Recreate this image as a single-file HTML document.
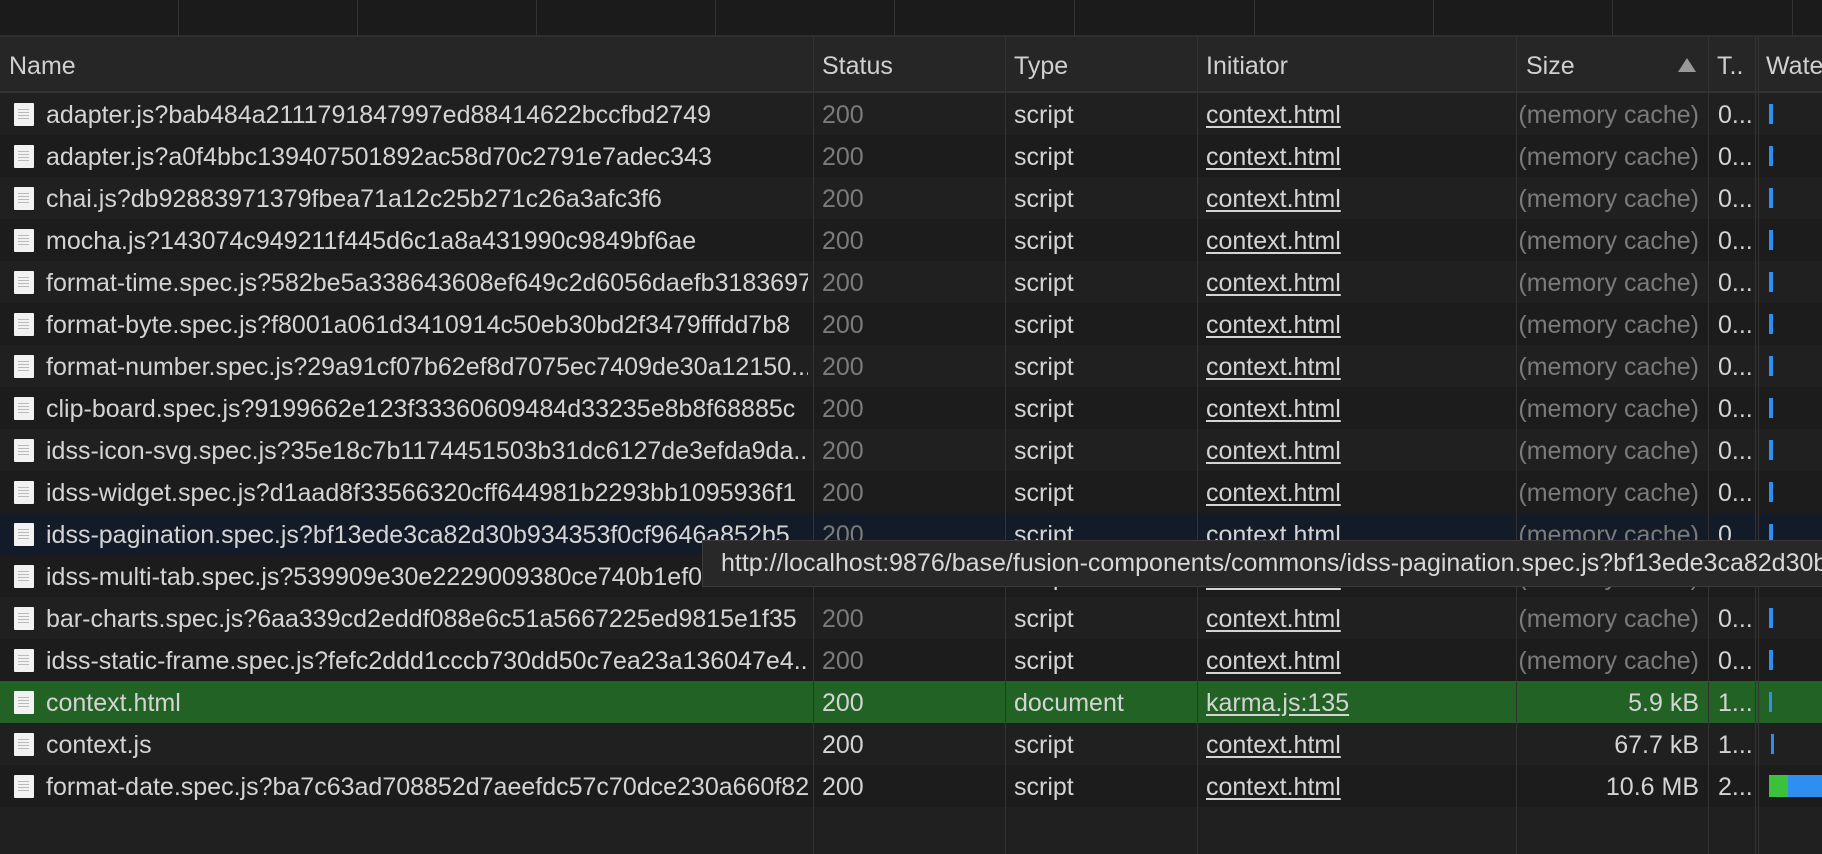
<!DOCTYPE html>
<html><head><meta charset="utf-8"><style>
*{margin:0;padding:0;box-sizing:border-box}
body{width:1822px;height:854px;overflow:hidden;background:#202020;font-family:"Liberation Sans",Arial,sans-serif;font-size:25px;color:#d4d4d4;position:relative}
.top{position:absolute;left:0;top:0;width:1822px;height:37px;background:#1b1b1b;border-bottom:2px solid #2e2e2e}
.top i{position:absolute;top:0;width:1px;height:37px;background:#333}
.hdr{position:absolute;left:0;top:37px;width:1822px;height:56px;background:#262626;border-bottom:2px solid #333}
.hdr span{position:absolute;top:15px;color:#d0d0d0}
.row{position:absolute;left:0;width:1822px;height:42px}
.row span{position:absolute;top:8px;white-space:nowrap}
.row span.n{max-width:762px;overflow:hidden}
.row .ic{position:absolute;left:14px;top:10px;width:20px;height:23px;background:#f2f2f2;border-radius:1px}
.row .ic:before{content:"";position:absolute;left:4px;top:4px;width:11px;height:14px;background:repeating-linear-gradient(#f2f2f2 0 2px,#bbb 2px 3px)}
.u{text-decoration:underline;text-underline-offset:3px}
.g{color:#7b7b7b}
.vl{position:absolute;top:37px;width:1px;height:817px;background:#333}
.bar{position:absolute;top:11px;left:1769px;width:4px;height:20px;background:#2e8ff0}
</style></head><body>
<div class="top">
<i style="left:178px"></i><i style="left:357px"></i><i style="left:536px"></i><i style="left:715px"></i><i style="left:894px"></i><i style="left:1074px"></i><i style="left:1254px"></i><i style="left:1433px"></i><i style="left:1612px"></i><i style="left:1792px"></i>
</div>
<div class="hdr">
<span style="left:9px">Name</span><span style="left:822px">Status</span><span style="left:1014px">Type</span><span style="left:1206px">Initiator</span><span style="left:1526px">Size</span>
<span style="left:1678px;top:21px;width:0;height:0;border-left:9px solid transparent;border-right:9px solid transparent;border-bottom:14px solid #999"></span>
<span style="left:1717px">T..</span><span style="left:1766px">Wate</span>
</div>
<div class="row" style="top:93px;background:#202020"><div class="ic"></div><span class="n" style="left:46px">adapter.js?bab484a2111791847997ed88414622bccfbd2749</span><span class="g" style="left:822px">200</span><span style="left:1014px">script</span><span class="u" style="left:1206px">context.html</span><span class="g" style="right:123px">(memory cache)</span><span style="left:1718px">0...</span><div class="bar"></div></div>
<div class="row" style="top:135px;background:#1c1c1c"><div class="ic"></div><span class="n" style="left:46px">adapter.js?a0f4bbc139407501892ac58d70c2791e7adec343</span><span class="g" style="left:822px">200</span><span style="left:1014px">script</span><span class="u" style="left:1206px">context.html</span><span class="g" style="right:123px">(memory cache)</span><span style="left:1718px">0...</span><div class="bar"></div></div>
<div class="row" style="top:177px;background:#202020"><div class="ic"></div><span class="n" style="left:46px">chai.js?db92883971379fbea71a12c25b271c26a3afc3f6</span><span class="g" style="left:822px">200</span><span style="left:1014px">script</span><span class="u" style="left:1206px">context.html</span><span class="g" style="right:123px">(memory cache)</span><span style="left:1718px">0...</span><div class="bar"></div></div>
<div class="row" style="top:219px;background:#1c1c1c"><div class="ic"></div><span class="n" style="left:46px">mocha.js?143074c949211f445d6c1a8a431990c9849bf6ae</span><span class="g" style="left:822px">200</span><span style="left:1014px">script</span><span class="u" style="left:1206px">context.html</span><span class="g" style="right:123px">(memory cache)</span><span style="left:1718px">0...</span><div class="bar"></div></div>
<div class="row" style="top:261px;background:#202020"><div class="ic"></div><span class="n" style="left:46px">format-time.spec.js?582be5a338643608ef649c2d6056daefb3183697</span><span class="g" style="left:822px">200</span><span style="left:1014px">script</span><span class="u" style="left:1206px">context.html</span><span class="g" style="right:123px">(memory cache)</span><span style="left:1718px">0...</span><div class="bar"></div></div>
<div class="row" style="top:303px;background:#1c1c1c"><div class="ic"></div><span class="n" style="left:46px">format-byte.spec.js?f8001a061d3410914c50eb30bd2f3479fffdd7b8</span><span class="g" style="left:822px">200</span><span style="left:1014px">script</span><span class="u" style="left:1206px">context.html</span><span class="g" style="right:123px">(memory cache)</span><span style="left:1718px">0...</span><div class="bar"></div></div>
<div class="row" style="top:345px;background:#202020"><div class="ic"></div><span class="n" style="left:46px">format-number.spec.js?29a91cf07b62ef8d7075ec7409de30a12150...</span><span class="g" style="left:822px">200</span><span style="left:1014px">script</span><span class="u" style="left:1206px">context.html</span><span class="g" style="right:123px">(memory cache)</span><span style="left:1718px">0...</span><div class="bar"></div></div>
<div class="row" style="top:387px;background:#1c1c1c"><div class="ic"></div><span class="n" style="left:46px">clip-board.spec.js?9199662e123f33360609484d33235e8b8f68885c</span><span class="g" style="left:822px">200</span><span style="left:1014px">script</span><span class="u" style="left:1206px">context.html</span><span class="g" style="right:123px">(memory cache)</span><span style="left:1718px">0...</span><div class="bar"></div></div>
<div class="row" style="top:429px;background:#202020"><div class="ic"></div><span class="n" style="left:46px">idss-icon-svg.spec.js?35e18c7b1174451503b31dc6127de3efda9da...</span><span class="g" style="left:822px">200</span><span style="left:1014px">script</span><span class="u" style="left:1206px">context.html</span><span class="g" style="right:123px">(memory cache)</span><span style="left:1718px">0...</span><div class="bar"></div></div>
<div class="row" style="top:471px;background:#1c1c1c"><div class="ic"></div><span class="n" style="left:46px">idss-widget.spec.js?d1aad8f33566320cff644981b2293bb1095936f1</span><span class="g" style="left:822px">200</span><span style="left:1014px">script</span><span class="u" style="left:1206px">context.html</span><span class="g" style="right:123px">(memory cache)</span><span style="left:1718px">0...</span><div class="bar"></div></div>
<div class="row" style="top:513px;background:#141b28"><div class="ic"></div><span class="n" style="left:46px">idss-pagination.spec.js?bf13ede3ca82d30b934353f0cf9646a852b5</span><span class="g" style="left:822px">200</span><span style="left:1014px">script</span><span class="u" style="left:1206px">context.html</span><span class="g" style="right:123px">(memory cache)</span><span style="left:1718px">0...</span><div class="bar"></div></div>
<div class="row" style="top:555px;background:#1c1c1c"><div class="ic"></div><span class="n" style="left:46px">idss-multi-tab.spec.js?539909e30e2229009380ce740b1ef0d8</span><span class="g" style="left:822px">200</span><span style="left:1014px">script</span><span class="u" style="left:1206px">context.html</span><span class="g" style="right:123px">(memory cache)</span><span style="left:1718px">0...</span><div class="bar"></div></div>
<div class="row" style="top:597px;background:#202020"><div class="ic"></div><span class="n" style="left:46px">bar-charts.spec.js?6aa339cd2eddf088e6c51a5667225ed9815e1f35</span><span class="g" style="left:822px">200</span><span style="left:1014px">script</span><span class="u" style="left:1206px">context.html</span><span class="g" style="right:123px">(memory cache)</span><span style="left:1718px">0...</span><div class="bar"></div></div>
<div class="row" style="top:639px;background:#1c1c1c"><div class="ic"></div><span class="n" style="left:46px">idss-static-frame.spec.js?fefc2ddd1cccb730dd50c7ea23a136047e4...</span><span class="g" style="left:822px">200</span><span style="left:1014px">script</span><span class="u" style="left:1206px">context.html</span><span class="g" style="right:123px">(memory cache)</span><span style="left:1718px">0...</span><div class="bar"></div></div>
<div class="row" style="top:681px;background:#236225"><div class="ic"></div><span class="n" style="left:46px">context.html</span><span style="left:822px">200</span><span style="left:1014px">document</span><span class="u" style="left:1206px">karma.js:135</span><span style="right:123px">5.9 kB</span><span style="left:1718px">1...</span><div class="bar" style="width:3px"></div></div>
<div class="row" style="top:723px;background:#202020"><div class="ic"></div><span class="n" style="left:46px">context.js</span><span style="left:822px">200</span><span style="left:1014px">script</span><span class="u" style="left:1206px">context.html</span><span style="right:123px">67.7 kB</span><span style="left:1718px">1...</span><div class="bar" style="left:1771px;width:3px"></div></div>
<div class="row" style="top:765px;background:#1c1c1c"><div class="ic"></div><span class="n" style="left:46px">format-date.spec.js?ba7c63ad708852d7aeefdc57c70dce230a660f82</span><span style="left:822px">200</span><span style="left:1014px">script</span><span class="u" style="left:1206px">context.html</span><span style="right:123px">10.6 MB</span><span style="left:1718px">2...</span><div class="bar" style="left:1769px;width:19px;background:#3cc13c;height:22px;top:10px"></div><div class="bar" style="left:1788px;width:34px;height:22px;top:10px"></div></div>
<div class="vl" style="left:813px"></div><div class="vl" style="left:1005px"></div><div class="vl" style="left:1197px"></div><div class="vl" style="left:1516px"></div><div class="vl" style="left:1708px"></div><div class="vl" style="left:1755px"></div><div class="vl" style="left:1758px"></div>
<div style="position:absolute;left:702px;top:540px;width:1130px;height:47px;background:#282828;border:1px solid #3a3a3a;color:#d8d8d8;padding:8px 0 0 18px;white-space:nowrap;overflow:hidden">http://localhost:9876/base/fusion-components/commons/idss-pagination.spec.js?bf13ede3ca82d30b934353f0cf9646a852b5</div>
</body></html>
